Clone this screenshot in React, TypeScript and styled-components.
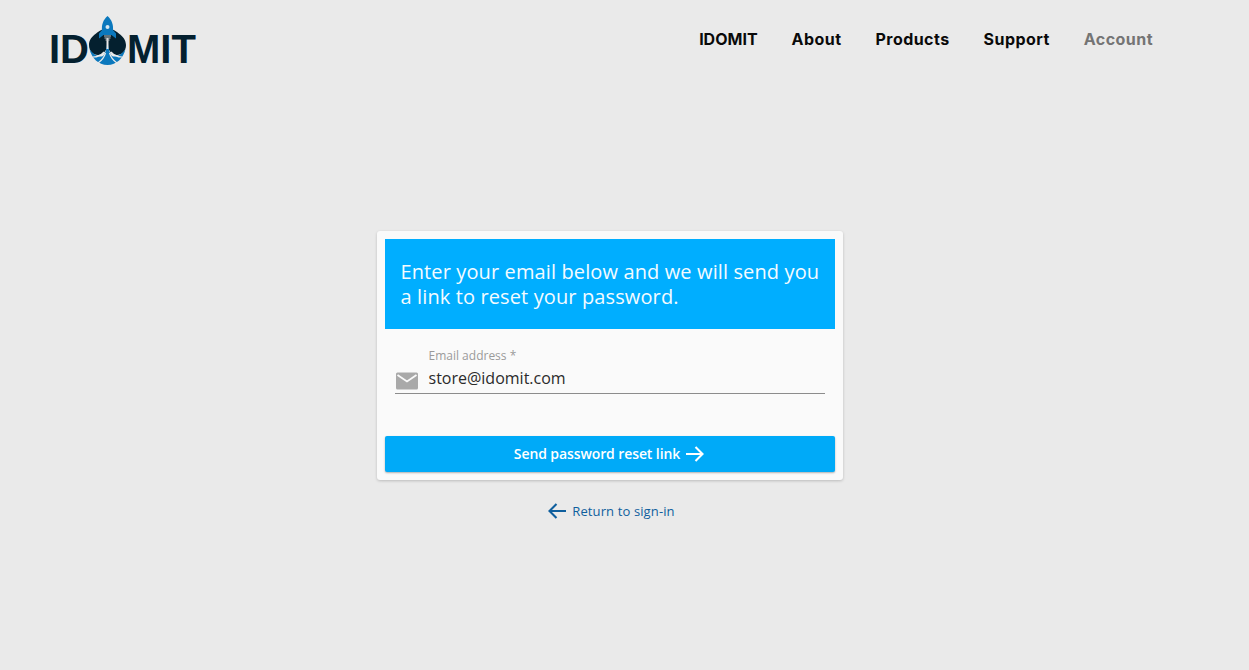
import React from 'react'
import styled, { createGlobalStyle } from 'styled-components'

const GlobalStyle = createGlobalStyle`
  html, body {
    margin: 0;
    padding: 0;
    background: #eaeaea;
    font-family: 'Open Sans', 'Liberation Sans', sans-serif;
  }
  * {
    box-sizing: border-box;
  }
`

const Page = styled.div`
  height: 670px;
  overflow: hidden;
  background: #eaeaea;
`

const Header = styled.header`
  display: flex;
  justify-content: space-between;
  height: 231px;
  padding: 13px 96px 0 49px;
`

const Logo = styled.div`
  display: flex;
  align-items: flex-start;
  height: 56px;
  color: #04202f;
  font-family: 'Liberation Sans', Arial, sans-serif;
  font-size: 40px;
  line-height: 1;
  font-weight: 700;
`

const LogoText = styled.span<{ $spacing: number }>`
  margin-top: 16px;
  letter-spacing: ${(p) => p.$spacing}px;
`

const LogoMark = styled.svg`
  display: block;
  width: 38px;
  height: 50px;
  margin: 3px 0 0 0;
  flex-shrink: 0;
`

const Nav = styled.nav`
  display: flex;
  gap: 34px;
  padding-top: 16px;
`

const NavLink = styled.a<{ $muted?: boolean; $spacing?: number }>`
  color: ${(p) => (p.$muted ? '#747474' : '#0a0a0a')};
  font-family: 'Inter', 'Liberation Sans', sans-serif;
  font-size: 16px;
  line-height: 21px;
  font-weight: 700;
  letter-spacing: ${(p) => p.$spacing ?? 0.45}px;
`

const Main = styled.main`
  display: flex;
  flex-direction: column;
  align-items: center;
  padding-right: 30px;
`

const Card = styled.section`
  width: 466px;
  height: 249px;
  padding: 8px 8px 8px;
  border-radius: 3px;
  background: #fafafa;
  box-shadow: 0 1px 3px rgba(0, 0, 0, 0.2);
  display: flex;
  flex-direction: column;
`

const Banner = styled.div`
  height: 90px;
  padding: 20px 16px 0;
  background: #00aeff;
  color: #f4fbff;
  font-size: 20px;
  line-height: 25px;
  letter-spacing: 0.12px;
  white-space: nowrap;
`

const Field = styled.div`
  margin: 19px 10px 0;
  height: 46px;
  border-bottom: 1px solid #8c8c8c;
  display: grid;
  grid-template-columns: 34px 1fr;
  grid-template-rows: 15px 30px;
`

const FieldLabel = styled.label`
  grid-column: 2;
  grid-row: 1;
  color: #9a9a9a;
  font-size: 12px;
  line-height: 15px;
`

const FieldIcon = styled.svg`
  grid-column: 1;
  grid-row: 2;
  display: block;
  width: 22px;
  height: 18px;
  margin: 9px 0 0 1px;
`

const FieldValue = styled.div`
  grid-column: 2;
  grid-row: 2;
  color: #2b2b2b;
  font-size: 16px;
  line-height: 24px;
  padding-top: 3px;
`

const SubmitButton = styled.button`
  margin-top: auto;
  height: 36px;
  border: 0;
  border-radius: 2px;
  background: #00aaf8;
  box-shadow: 0 1px 2px rgba(0, 0, 0, 0.3);
  color: #fff;
  font-family: 'Open Sans', 'Liberation Sans', sans-serif;
  font-size: 14px;
  font-weight: 600;
  letter-spacing: -0.1px;
  display: flex;
  align-items: center;
  justify-content: center;
  gap: 5px;
  padding: 0;
`

const ButtonLabel = styled.span`
  padding-bottom: 2px;
`

const ArrowIcon = styled.svg`
  display: block;
  width: 20px;
  height: 20px;
  fill: none;
  stroke: currentColor;
  stroke-width: 2.1;
`

const ReturnLink = styled.a`
  display: flex;
  align-items: center;
  gap: 5px;
  margin-top: 21px;
  padding-left: 3px;
  color: #0f5f9e;
  font-size: 13px;
  line-height: 20px;
  letter-spacing: 0.12px;
`

const Arrow = ({ back }: { back?: boolean }) => (
  <ArrowIcon viewBox="0 0 20 20">
    {back ? <path d="M19 10H2.500M9.500 3 2.500 10l7 7" /> : <path d="M1 10h16.500M10.500 3l7 7-7 7" />}
  </ArrowIcon>
)

const App = () => (
  <Page>
    <GlobalStyle />
    <Header>
      <Logo>
        <LogoText $spacing={0}>ID</LogoText>
        <LogoMark viewBox="0 0 38 50">
          {/* spade */}
          <path
            d="M18.500 10C12 15 0 19 0 29c0 6 4 10 9 10 4 0 7.500-3 9.500-8 2 5 5.500 8 9.500 8 5 0 9-4 9-10 0-10-12-14-18.500-19Z"
            fill="#04202f"
          />
          {/* flames */}
          <path
            d="M0.500 33c2 9 9 16 18 16s16-7 18-16c-3 5-8 7.500-12 7.500-3 0-5-6-6-16-1 10-3 16-6 16-4 0-9-2.500-12-7.500Z"
            fill="#0b78bd"
          />
          <path d="M4 41c4 0 8-1.500 11-5M33 41c-4 0-8-1.500-11-5" stroke="#eaeaea" strokeWidth="1.200" fill="none" />
          <path d="M9 47c3-2 6-5 7.500-10M28 47c-3-2-6-5-7.500-10" stroke="#eaeaea" strokeWidth="1.200" fill="none" />
          <path d="M18.500 22v11" stroke="#eaeaea" strokeWidth="2" />
          {/* rocket */}
          <path
            d="M18.500 0c4.500 4 6 9 5.500 14l3 3.500v5l-4.500-3.500h-8l-4.500 3.500v-5l3-3.500c-.5-5 1-10 5.500-14Z"
            fill="#0b78bd"
          />
          <circle cx="18.500" cy="11" r="2" fill="#d8e8f2" />
          <path d="M15 20h7M15.500 22h6M16.500 24h4" stroke="#c4c4c4" strokeWidth="1.200" />
        </LogoMark>
        <LogoText $spacing={0}>MIT</LogoText>
      </Logo>
      <Nav>
        <NavLink $spacing={0}>IDOMIT</NavLink>
        <NavLink>About</NavLink>
        <NavLink>Products</NavLink>
        <NavLink>Support</NavLink>
        <NavLink $muted>Account</NavLink>
      </Nav>
    </Header>
    <Main>
      <Card>
        <Banner>
          Enter your email below and we will send you
          <br />a link to reset your password.
        </Banner>
        <Field>
          <FieldLabel>Email address *</FieldLabel>
          <FieldIcon viewBox="0 0 22 18">
            <rect width="22" height="17" y="0.500" rx="1.500" fill="#a9a9a9" />
            <path d="M1.500 3 11 9.500 20.500 3" fill="none" stroke="#fafafa" strokeWidth="1.800" />
          </FieldIcon>
          <FieldValue>store@idomit.com</FieldValue>
        </Field>
        <SubmitButton>
          <ButtonLabel>Send password reset link</ButtonLabel>
          <Arrow />
        </SubmitButton>
      </Card>
      <ReturnLink>
        <Arrow back />
        Return to sign-in
      </ReturnLink>
    </Main>
  </Page>
)

export default App
